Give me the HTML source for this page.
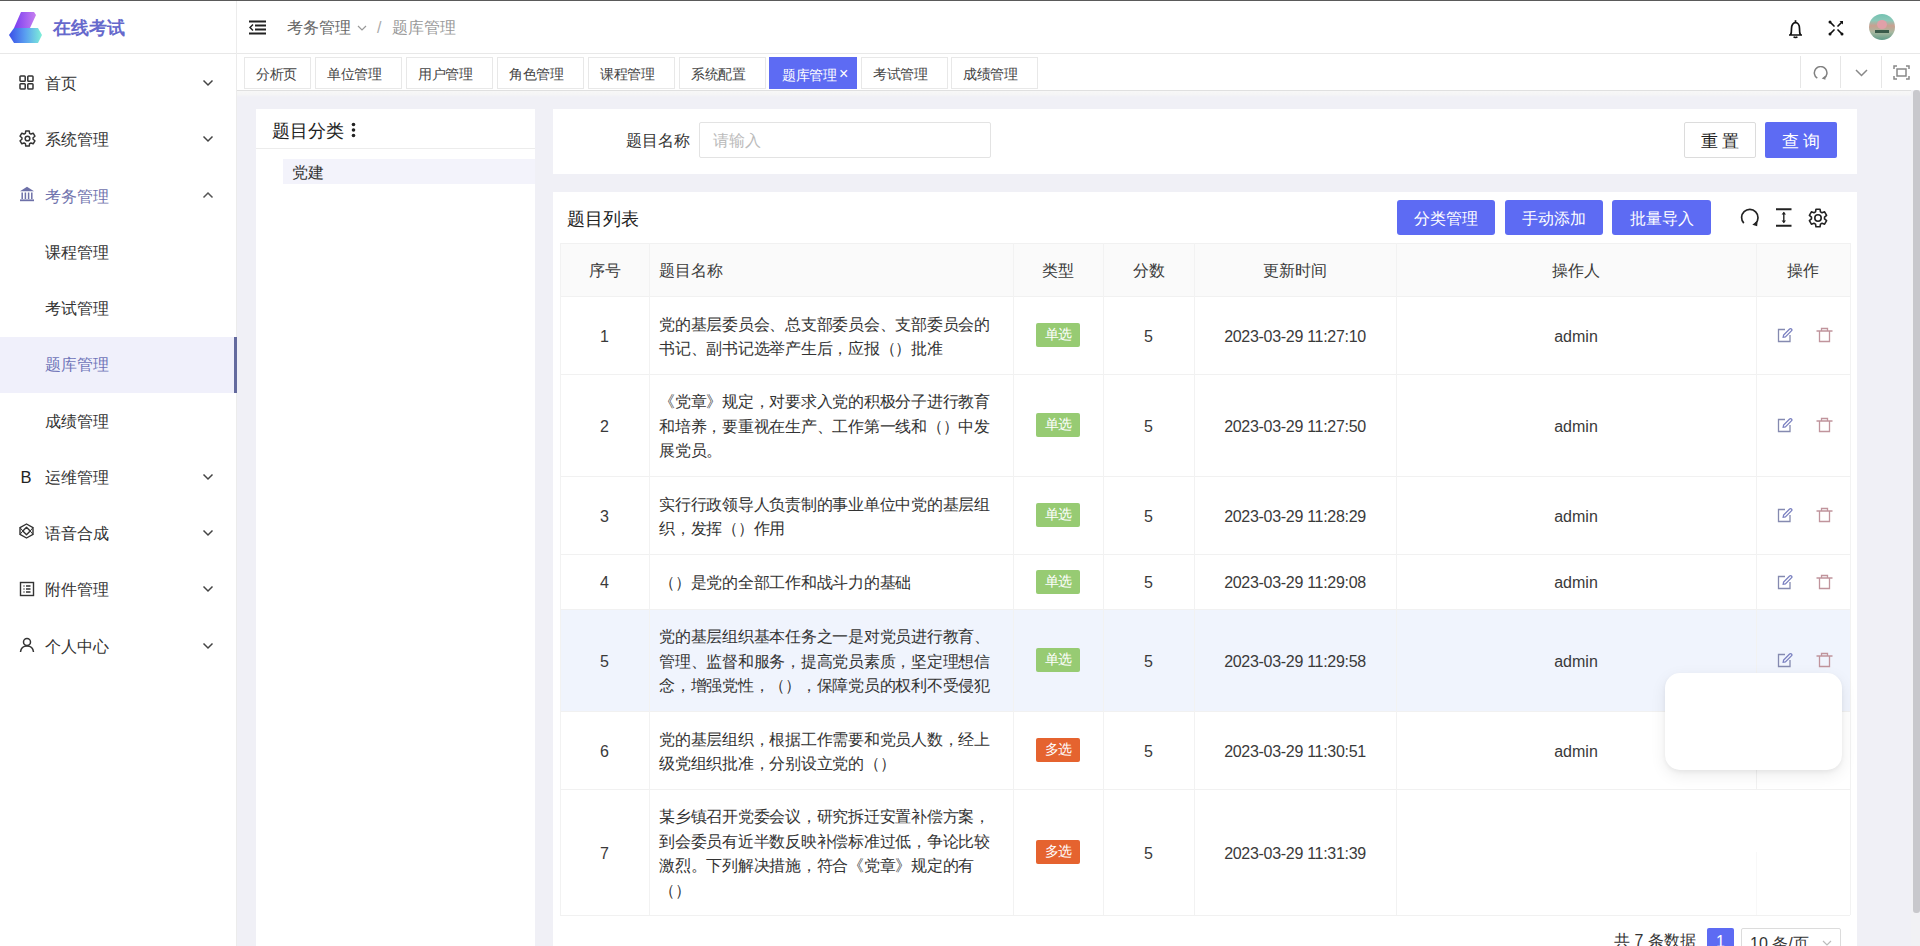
<!DOCTYPE html>
<html><head><meta charset="utf-8">
<style>
*{margin:0;padding:0;box-sizing:border-box}
html,body{width:1920px;height:946px;overflow:hidden;background:#f0f0f6;font-family:"Liberation Sans",sans-serif;color:#333}
.abs{position:absolute}
#topline{left:0;top:0;width:1920px;height:1px;background:#5a5a5a}
#side{left:0;top:1px;width:237px;height:945px;background:#fff;border-right:1px solid #ececec}
#logo{left:0;top:0;width:236px;height:53px;border-bottom:1px solid #e8e8e8}
.logotxt{left:53px;top:15px;font-size:18px;font-weight:bold;color:#6669cc;letter-spacing:0px}
.mi{position:absolute;left:0;width:236px;height:56px;font-size:16px;color:#333}
.mi .t{position:absolute;left:45px;top:17px;line-height:22px;white-space:nowrap}
.mi .ic{position:absolute;left:19px;top:20px;width:16px;height:16px}
.mi .ch{position:absolute;left:202px;top:23px;width:12px;height:8px}
.mi.act{background:#f0f0fb;color:#6f74b8}
.mi.act:after{content:"";position:absolute;right:-1px;top:0;width:3px;height:56px;background:#646a9e}
#hdr{left:237px;top:1px;width:1683px;height:53px;background:#fff;border-bottom:1px solid #e8e8e8}
#tabs{left:237px;top:54px;width:1683px;height:37px;background:#fff;border-bottom:1px solid #e0e0e0;box-shadow:0 1px 1px rgba(0,0,0,.04)}
#tabsh{left:237px;top:91px;width:1676px;height:6px;background:linear-gradient(#f7f7f7,#f5f5f6 60%,#f0f0f6)}
.tab{position:absolute;top:3px;height:32px;border:1px solid #e8e8e8;font-size:13.5px;color:#444;line-height:30px;padding-top:2px;padding-left:11px;text-align:left;background:#fff;white-space:nowrap}
.tab.on{background:#5d6bf3;border-color:#5d6bf3;color:#fff}
.sep{position:absolute;top:2px;width:1px;height:32px;background:#e6e6e6}
#lp{left:256px;top:109px;width:279px;height:837px;background:#fff}
#sc{left:553px;top:109px;width:1304px;height:65px;background:#fff}
#tc{left:553px;top:192px;width:1304px;height:754px;background:#fff}
.btn{position:absolute;height:35px;border-radius:3px;background:#5d6bf3;color:#fff;font-size:16px;line-height:37px;text-align:center;white-space:nowrap}
#scroll{left:1913px;top:90px;width:7px;height:823px;background:#c8c8cc;border-radius:3px}
#scrolltrack{left:1911px;top:90px;width:9px;height:856px;background:#f1f1f4}
.hl{position:absolute;height:1px;background:#f1f1f1}
.vl{position:absolute;width:1px;background:#f2f2f2}
.cell{position:absolute;padding-top:4px;display:flex;align-items:center;justify-content:center;font-size:16px;color:#3a3a3a;line-height:24.5px}
.qt{width:343px;white-space:nowrap;letter-spacing:-0.2px;font-size:16px;line-height:24.5px;color:#333}
.tg{display:inline-block;margin-top:-4px;width:44px;height:24px;line-height:24px;text-align:center;font-size:13.5px;color:#fff;background:#97cb73;border-radius:2px}
.tg.o{background:#e5632f}
.tm{letter-spacing:-0.3px}
.ed{position:absolute;left:21px;top:50%;margin-top:-8px}
.dl{position:absolute;left:60px;top:50%;margin-top:-8px}
@font-face{font-family:"LT";src:local("Liberation Sans");size-adjust:135%;ascent-override:67%;descent-override:15.7%;line-gap-override:0%}
i{font-style:normal;font-family:"LT","Liberation Sans",sans-serif;display:inline-block;width:1em;text-align:center;text-indent:0}
.qt i{width:0.985em}
</style></head><body>
<div id="topline" class="abs"></div>
<div id="side" class="abs">
  <div id="logo" class="abs">
    <svg class="abs" style="left:8px;top:10px" width="36" height="33" viewBox="0 0 36 33">
      <defs>
        <linearGradient id="g1" x1="0" y1="0" x2="1" y2="0"><stop offset="0" stop-color="#7a3df0"/><stop offset="1" stop-color="#c77ff0"/></linearGradient>
        <linearGradient id="g2" x1="0" y1="0" x2="1" y2="0"><stop offset="0" stop-color="#3a4ee8"/><stop offset=".5" stop-color="#5aa0f0"/><stop offset="1" stop-color="#7ff0d8"/></linearGradient>
      </defs>
      <path d="M13 1 L26 1 L28 4 L22 17 L6 17 Z" fill="url(#g1)"/>
      <path d="M6 17 L30 17 L34 24 L30 32 L6 32 L1 24 Z" fill="url(#g2)"/>
    </svg>
    <div class="abs logotxt"><i>在</i><i>线</i><i>考</i><i>试</i></div>
  </div>
  <!-- menu -->
  <div class="mi" style="top:55.0px">
    <svg class="ic" style="top:19px;width:15px;height:15px" viewBox="0 0 15 15"><g fill="none" stroke="#333" stroke-width="1.5"><rect x="1" y="1" width="5.2" height="5.2" rx="0.8"/><rect x="8.8" y="1" width="5.2" height="5.2" rx="0.8"/><rect x="1" y="8.8" width="5.2" height="5.2" rx="0.8"/><rect x="8.8" y="8.8" width="5.2" height="5.2" rx="0.8"/></g></svg>
    <span class="t"><i>首</i><i>页</i></span>
    <svg class="ch" viewBox="0 0 12 8"><path d="M1.5 1.5 L6 6 L10.5 1.5" fill="none" stroke="#444" stroke-width="1.5"/></svg>
  </div>
  <div class="mi" style="top:111.25px">
    <svg class="ic" style="left:19px;top:18px;width:17px;height:17px" viewBox="0 0 16 16"><g fill="none" stroke="#333" stroke-width="1.4" stroke-linejoin="round"><path d="M6.01 3.09 L6.36 0.89 L9.64 0.89 L9.99 3.09 L11.26 3.82 L13.34 3.02 L14.98 5.87 L13.25 7.26 L13.25 8.74 L14.98 10.13 L13.34 12.98 L11.26 12.18 L9.99 12.91 L9.64 15.11 L6.36 15.11 L6.01 12.91 L4.74 12.18 L2.66 12.98 L1.02 10.13 L2.75 8.74 L2.75 7.26 L1.02 5.87 L2.66 3.02 L4.74 3.82 Z"/><circle cx="8" cy="8" r="2.2"/></g></svg>
    <span class="t"><i>系</i><i>统</i><i>管</i><i>理</i></span>
    <svg class="ch" viewBox="0 0 12 8"><path d="M1.5 1.5 L6 6 L10.5 1.5" fill="none" stroke="#444" stroke-width="1.5"/></svg>
  </div>
  <div class="mi" style="top:167.5px;color:#6f72ad">
    <svg class="ic" style="top:17.5px" viewBox="0 0 16 16"><path d="M1 5.2 L8 0.8 L15 5.2 Z" fill="#6d70a8"/><g fill="none" stroke="#6d70a8" stroke-width="1.5"><path d="M3.2 6.5 V13 M6.4 6.5 V13 M9.6 6.5 V13 M12.8 6.5 V13"/><path d="M1 14.3 H15" stroke-width="1.8"/></g></svg>
    <span class="t"><i>考</i><i>务</i><i>管</i><i>理</i></span>
    <svg class="ch" style="top:22px" viewBox="0 0 12 8"><path d="M1.5 6.5 L6 2 L10.5 6.5" fill="none" stroke="#555" stroke-width="1.5"/></svg>
  </div>
  <div class="mi" style="top:223.75px"><span class="t"><i>课</i><i>程</i><i>管</i><i>理</i></span></div>
  <div class="mi" style="top:280.0px"><span class="t"><i>考</i><i>试</i><i>管</i><i>理</i></span></div>
  <div class="mi act" style="top:336.25px"><span class="t"><i>题</i><i>库</i><i>管</i><i>理</i></span></div>
  <div class="mi" style="top:392.5px"><span class="t"><i>成</i><i>绩</i><i>管</i><i>理</i></span></div>
  <div class="mi" style="top:448.75px">
    <span class="abs" style="left:20.5px;top:16.5px;font-size:16.5px;line-height:22px;color:#222">B</span>
    <span class="t"><i>运</i><i>维</i><i>管</i><i>理</i></span>
    <svg class="ch" viewBox="0 0 12 8"><path d="M1.5 1.5 L6 6 L10.5 1.5" fill="none" stroke="#444" stroke-width="1.5"/></svg>
  </div>
  <div class="mi" style="top:505.0px">
    <svg class="ic" style="top:17px;width:15px;height:16px" viewBox="0 0 15 16"><g fill="none" stroke="#333" stroke-width="1.4" stroke-linejoin="round"><path d="M7.5 1 L14 4.6 V11.4 L7.5 15 L1 11.4 V4.6 Z"/><path d="M7.5 4.3 L11.2 8 L7.5 11.7 L3.8 8 Z"/><path d="M1 4.6 L3.8 8 L1 11.4 M14 4.6 L11.2 8 L14 11.4" stroke-width="1"/></g></svg>
    <span class="t"><i>语</i><i>音</i><i>合</i><i>成</i></span>
    <svg class="ch" viewBox="0 0 12 8"><path d="M1.5 1.5 L6 6 L10.5 1.5" fill="none" stroke="#444" stroke-width="1.5"/></svg>
  </div>
  <div class="mi" style="top:561.25px">
    <svg class="ic" style="top:18.5px" viewBox="0 0 16 16"><g fill="none" stroke="#333" stroke-width="1.4"><rect x="1.5" y="1.5" width="13" height="13"/><path d="M4.5 5 H5.5 M4.5 8 H5.5 M4.5 11 H5.5 M7 5 H11.5 M7 8 H11.5 M7 11 H11.5"/></g></svg>
    <span class="t"><i>附</i><i>件</i><i>管</i><i>理</i></span>
    <svg class="ch" viewBox="0 0 12 8"><path d="M1.5 1.5 L6 6 L10.5 1.5" fill="none" stroke="#444" stroke-width="1.5"/></svg>
  </div>
  <div class="mi" style="top:617.5px">
    <svg class="ic" style="top:18px" viewBox="0 0 16 16"><g fill="none" stroke="#333" stroke-width="1.5"><circle cx="8" cy="5" r="3.5"/><path d="M1.5 15 C2 10.5 5 9 8 9 C11 9 14 10.5 14.5 15"/></g></svg>
    <span class="t"><i>个</i><i>人</i><i>中</i><i>心</i></span>
    <svg class="ch" viewBox="0 0 12 8"><path d="M1.5 1.5 L6 6 L10.5 1.5" fill="none" stroke="#444" stroke-width="1.5"/></svg>
  </div>
</div>

<div id="hdr" class="abs">
  <svg class="abs" style="left:12px;top:19px" width="17" height="15" viewBox="0 0 17 15"><g stroke="#222" stroke-width="1.8" fill="none"><path d="M0 1.5 H17 M6 5.5 H17 M6 9.5 H17 M0 13.5 H17"/><path d="M4 4.5 L1 7.5 L4 10.5" stroke-width="1.5"/></g></svg>
  <span class="abs" style="left:50px;top:16px;font-size:16px;color:#666;line-height:22px"><i>考</i><i>务</i><i>管</i><i>理</i></span>
  <svg class="abs" style="left:120px;top:24px" width="10" height="7" viewBox="0 0 10 7"><path d="M1 1 L5 5 L9 1" fill="none" stroke="#999" stroke-width="1.2"/></svg>
  <span class="abs" style="left:140px;top:16px;font-size:16px;color:#aaa;line-height:22px">/</span>
  <span class="abs" style="left:155px;top:16px;font-size:16px;color:#999;line-height:22px"><i>题</i><i>库</i><i>管</i><i>理</i></span>
  <!-- bell -->
  <svg class="abs" style="left:1551px;top:18px" width="15" height="20" viewBox="0 0 15 20"><g fill="none" stroke="#111" stroke-width="1.7" stroke-linejoin="round"><path d="M1 16 H14 M2.6 16 C3.4 14.5 3.5 12.5 3.5 9.5 C3.5 6 5.2 3.6 7.5 3.6 C9.8 3.6 11.5 6 11.5 9.5 C11.5 12.5 11.6 14.5 12.4 16"/><path d="M7.5 1.2 V3.6"/><path d="M5.8 17.6 C6.3 18.8 8.7 18.8 9.2 17.6"/></g></svg>
  <!-- fullscreen -->
  <svg class="abs" style="left:1591px;top:19px" width="16" height="16" viewBox="0 0 16 16"><g fill="none" stroke="#111" stroke-width="1.7" stroke-linecap="round"><path d="M2 2 L6 6 M14 2 L10 6 M2 14 L6 10 M14 14 L10 10"/></g><g fill="#111"><circle cx="2" cy="2" r="1.5"/><path d="M11.5 1 H15 V4.5 Z"/><circle cx="2" cy="14" r="1.5"/><circle cx="14" cy="14" r="1.5"/></g></svg>
  <!-- avatar -->
  <div class="abs" style="left:1632px;top:13px;width:26px;height:26px;border-radius:50%;overflow:hidden;background:linear-gradient(180deg,#74c2b2 0%,#8cc8b8 25%,#c9a090 45%,#a8b8a0 70%,#5e9a88 100%)"><div style="position:absolute;left:8px;top:6px;width:10px;height:9px;border-radius:50%;background:#e0a0a8"></div><div style="position:absolute;left:6px;top:16px;width:14px;height:3px;background:#3a5a4a"></div></div>
</div>

<div id="tabs" class="abs">
  <div class="tab" style="left:7px;width:67px"><i>分</i><i>析</i><i>页</i></div>
  <div class="tab" style="left:78px;width:87px"><i>单</i><i>位</i><i>管</i><i>理</i></div>
  <div class="tab" style="left:169px;width:87px"><i>用</i><i>户</i><i>管</i><i>理</i></div>
  <div class="tab" style="left:260px;width:87px"><i>角</i><i>色</i><i>管</i><i>理</i></div>
  <div class="tab" style="left:351px;width:87px"><i>课</i><i>程</i><i>管</i><i>理</i></div>
  <div class="tab" style="left:442px;width:87px"><i>系</i><i>统</i><i>配</i><i>置</i></div>
  <div class="tab on" style="left:532px;width:88px;padding-left:12px"><i>题</i><i>库</i><i>管</i><i>理</i><span style="font-size:16px;margin-left:3px;position:relative;top:-1px">×</span></div>
  <div class="tab" style="left:624px;width:87px"><i>考</i><i>试</i><i>管</i><i>理</i></div>
  <div class="tab" style="left:714px;width:87px"><i>成</i><i>绩</i><i>管</i><i>理</i></div>
  <div class="sep" style="left:1563px"></div>
  <div class="sep" style="left:1603px"></div>
  <div class="sep" style="left:1644px"></div>
  <svg class="abs" style="left:1576px;top:12px" width="15" height="15" viewBox="0 0 15 15"><path d="M4.3 12.2 A6.3 6.3 0 1 1 11 12.2" fill="none" stroke="#808080" stroke-width="1.5"/><path d="M8.7 12.6 L12.6 9.6 L12.4 13.8 Z" fill="#808080"/></svg>
  <svg class="abs" style="left:1618px;top:15px" width="13" height="8" viewBox="0 0 13 8"><path d="M1 1 L6.5 6.5 L12 1" fill="none" stroke="#888" stroke-width="1.5"/></svg>
  <svg class="abs" style="left:1656px;top:11px" width="17" height="15" viewBox="0 0 17 15"><g fill="none" stroke="#888" stroke-width="1.5"><rect x="4" y="4" width="9" height="7"/><path d="M1 4 V1 H4 M13 1 H16 V4 M16 11 V14 H13 M4 14 H1 V11"/></g></svg>
</div>

<div id="tabsh" class="abs"></div>
<div id="lp" class="abs">
  <span class="abs" style="left:16px;top:10px;font-size:18px;line-height:24px;color:#222"><i>题</i><i>目</i><i>分</i><i>类</i></span>
  <svg class="abs" style="left:95px;top:13px" width="5" height="16" viewBox="0 0 5 16"><g fill="#222"><circle cx="2.5" cy="2.5" r="1.8"/><circle cx="2.5" cy="8" r="1.8"/><circle cx="2.5" cy="13.5" r="1.8"/></g></svg>
  <div class="abs" style="left:0;top:39px;width:279px;height:1px;background:#ececec"></div>
  <div class="abs" style="left:27px;top:50px;width:252px;height:25px;background:#f3f3fb"></div>
  <span class="abs" style="left:36px;top:53px;font-size:16px;line-height:22px;color:#333"><i>党</i><i>建</i></span>
</div>

<div id="sc" class="abs">
  <span class="abs" style="left:73px;top:21px;font-size:16px;line-height:22px;color:#333"><i>题</i><i>目</i><i>名</i><i>称</i></span>
  <div class="abs" style="left:146px;top:13px;width:292px;height:36px;border:1px solid #e3e3e3;border-radius:2px"></div>
  <span class="abs" style="left:160px;top:21px;font-size:16px;line-height:22px;color:#bbb"><i>请</i><i>输</i><i>入</i></span>
  <div class="btn" style="left:1131px;top:13px;width:72px;height:36px;background:#fff;border:1px solid #dcdcdc;color:#222;line-height:36px;font-size:16.5px;border-radius:2px"><i>重</i> <i>置</i></div>
  <div class="btn" style="left:1212px;top:13px;width:72px;height:36px;line-height:38px;font-size:16.5px;border-radius:2px"><i>查</i> <i>询</i></div>
</div>

<div id="tc" class="abs">
  <span class="abs" style="left:14px;top:15px;font-size:18px;line-height:24px;color:#222"><i>题</i><i>目</i><i>列</i><i>表</i></span>
  <div class="btn" style="left:844px;top:8px;width:98px"><i>分</i><i>类</i><i>管</i><i>理</i></div>
  <div class="btn" style="left:952px;top:8px;width:98px"><i>手</i><i>动</i><i>添</i><i>加</i></div>
  <div class="btn" style="left:1059px;top:8px;width:99px"><i>批</i><i>量</i><i>导</i><i>入</i></div>
<div class="abs" style="left:7px;top:51px;width:1290px;height:53px;background:#fafafa"></div>
<div class="abs" style="left:7px;top:417px;width:1290px;height:102px;background:#f0f4fd"></div>
<div class="hl" style="left:7px;top:51px;width:1290px"></div>
<div class="hl" style="left:7px;top:104px;width:1290px"></div>
<div class="hl" style="left:7px;top:182px;width:1290px"></div>
<div class="hl" style="left:7px;top:284px;width:1290px"></div>
<div class="hl" style="left:7px;top:362px;width:1290px"></div>
<div class="hl" style="left:7px;top:417px;width:1290px"></div>
<div class="hl" style="left:7px;top:519px;width:1290px"></div>
<div class="hl" style="left:7px;top:597px;width:1290px"></div>
<div class="hl" style="left:7px;top:723px;width:1290px"></div>
<div class="vl" style="left:7px;top:51px;height:672px"></div>
<div class="vl" style="left:96px;top:51px;height:672px"></div>
<div class="vl" style="left:460px;top:51px;height:672px"></div>
<div class="vl" style="left:550px;top:51px;height:672px"></div>
<div class="vl" style="left:641px;top:51px;height:672px"></div>
<div class="vl" style="left:843px;top:51px;height:672px"></div>
<div class="vl" style="left:1203px;top:51px;height:546px"></div><div class="vl" style="left:1203px;top:660px;height:63px;background:#f8f8f8"></div>
<div class="vl" style="left:1297px;top:51px;height:672px"></div>
<div class="cell" style="left:7px;top:51px;width:89px;height:53px"><i>序</i><i>号</i></div>
<div class="cell" style="left:106px;top:51px;width:354px;height:53px;justify-content:flex-start"><i>题</i><i>目</i><i>名</i><i>称</i></div>
<div class="cell" style="left:460px;top:51px;width:90px;height:53px"><i>类</i><i>型</i></div>
<div class="cell" style="left:550px;top:51px;width:91px;height:53px"><i>分</i><i>数</i></div>
<div class="cell" style="left:641px;top:51px;width:202px;height:53px"><i>更</i><i>新</i><i>时</i><i>间</i></div>
<div class="cell" style="left:843px;top:51px;width:360px;height:53px"><i>操</i><i>作</i><i>人</i></div>
<div class="cell" style="left:1203px;top:51px;width:94px;height:53px"><i>操</i><i>作</i></div>
<div class="cell" style="left:7px;top:104px;width:89px;height:78px;">1</div>
<div class="cell" style="left:106px;top:104px;width:344px;height:78px;justify-content:flex-start"><div class="qt"><i>党</i><i>的</i><i>基</i><i>层</i><i>委</i><i>员</i><i>会</i><i>、</i><i>总</i><i>支</i><i>部</i><i>委</i><i>员</i><i>会</i><i>、</i><i>支</i><i>部</i><i>委</i><i>员</i><i>会</i><i>的</i><br><i>书</i><i>记</i><i>、</i><i>副</i><i>书</i><i>记</i><i>选</i><i>举</i><i>产</i><i>生</i><i>后</i><i>，</i><i>应</i><i>报</i><i>（</i><i>）</i><i>批</i><i>准</i></div></div>
<div class="cell" style="left:460px;top:104px;width:90px;height:78px;"><span class="tg"><i>单</i><i>选</i></span></div>
<div class="cell" style="left:550px;top:104px;width:91px;height:78px;">5</div>
<div class="cell" style="left:641px;top:104px;width:202px;height:78px;"><span class="tm">2023-03-29 11:27:10</span></div>
<div class="cell" style="left:843px;top:104px;width:360px;height:78px;">admin</div>
<div class="cell" style="left:1203px;top:104px;width:94px;height:78px;"><svg class="ed" width="16" height="16" viewBox="0 0 16 16"><g fill="none" stroke="#858ab0" stroke-width="1.3"><path d="M8 2.5 H1.5 V14.5 H13 V8"/><path d="M6.2 10.2 L6.6 8 L12.6 2 C13.2 1.4 14 1.4 14.5 2 C15 2.5 15 3.3 14.4 3.9 L8.4 9.9 Z" stroke="#7a80c0"/></g></svg><svg class="dl" width="17" height="16" viewBox="0 0 17 16"><g fill="none" stroke="#c0949c" stroke-width="1.3"><path d="M0.5 4 H16.5 M5.5 4 V1.5 H11.5 V4 M3.5 4 V14.5 H13.5 V4"/></g></svg></div>
<div class="cell" style="left:7px;top:182px;width:89px;height:102px;">2</div>
<div class="cell" style="left:106px;top:182px;width:344px;height:102px;justify-content:flex-start"><div class="qt"><i>《</i><i>党</i><i>章</i><i>》</i><i>规</i><i>定</i><i>，</i><i>对</i><i>要</i><i>求</i><i>入</i><i>党</i><i>的</i><i>积</i><i>极</i><i>分</i><i>子</i><i>进</i><i>行</i><i>教</i><i>育</i><br><i>和</i><i>培</i><i>养</i><i>，</i><i>要</i><i>重</i><i>视</i><i>在</i><i>生</i><i>产</i><i>、</i><i>工</i><i>作</i><i>第</i><i>一</i><i>线</i><i>和</i><i>（</i><i>）</i><i>中</i><i>发</i><br><i>展</i><i>党</i><i>员</i><i>。</i></div></div>
<div class="cell" style="left:460px;top:182px;width:90px;height:102px;"><span class="tg"><i>单</i><i>选</i></span></div>
<div class="cell" style="left:550px;top:182px;width:91px;height:102px;">5</div>
<div class="cell" style="left:641px;top:182px;width:202px;height:102px;"><span class="tm">2023-03-29 11:27:50</span></div>
<div class="cell" style="left:843px;top:182px;width:360px;height:102px;">admin</div>
<div class="cell" style="left:1203px;top:182px;width:94px;height:102px;"><svg class="ed" width="16" height="16" viewBox="0 0 16 16"><g fill="none" stroke="#858ab0" stroke-width="1.3"><path d="M8 2.5 H1.5 V14.5 H13 V8"/><path d="M6.2 10.2 L6.6 8 L12.6 2 C13.2 1.4 14 1.4 14.5 2 C15 2.5 15 3.3 14.4 3.9 L8.4 9.9 Z" stroke="#7a80c0"/></g></svg><svg class="dl" width="17" height="16" viewBox="0 0 17 16"><g fill="none" stroke="#c0949c" stroke-width="1.3"><path d="M0.5 4 H16.5 M5.5 4 V1.5 H11.5 V4 M3.5 4 V14.5 H13.5 V4"/></g></svg></div>
<div class="cell" style="left:7px;top:284px;width:89px;height:78px;">3</div>
<div class="cell" style="left:106px;top:284px;width:344px;height:78px;justify-content:flex-start"><div class="qt"><i>实</i><i>行</i><i>行</i><i>政</i><i>领</i><i>导</i><i>人</i><i>负</i><i>责</i><i>制</i><i>的</i><i>事</i><i>业</i><i>单</i><i>位</i><i>中</i><i>党</i><i>的</i><i>基</i><i>层</i><i>组</i><br><i>织</i><i>，</i><i>发</i><i>挥</i><i>（</i><i>）</i><i>作</i><i>用</i></div></div>
<div class="cell" style="left:460px;top:284px;width:90px;height:78px;"><span class="tg"><i>单</i><i>选</i></span></div>
<div class="cell" style="left:550px;top:284px;width:91px;height:78px;">5</div>
<div class="cell" style="left:641px;top:284px;width:202px;height:78px;"><span class="tm">2023-03-29 11:28:29</span></div>
<div class="cell" style="left:843px;top:284px;width:360px;height:78px;">admin</div>
<div class="cell" style="left:1203px;top:284px;width:94px;height:78px;"><svg class="ed" width="16" height="16" viewBox="0 0 16 16"><g fill="none" stroke="#858ab0" stroke-width="1.3"><path d="M8 2.5 H1.5 V14.5 H13 V8"/><path d="M6.2 10.2 L6.6 8 L12.6 2 C13.2 1.4 14 1.4 14.5 2 C15 2.5 15 3.3 14.4 3.9 L8.4 9.9 Z" stroke="#7a80c0"/></g></svg><svg class="dl" width="17" height="16" viewBox="0 0 17 16"><g fill="none" stroke="#c0949c" stroke-width="1.3"><path d="M0.5 4 H16.5 M5.5 4 V1.5 H11.5 V4 M3.5 4 V14.5 H13.5 V4"/></g></svg></div>
<div class="cell" style="left:7px;top:362px;width:89px;height:55px;">4</div>
<div class="cell" style="left:106px;top:362px;width:344px;height:55px;justify-content:flex-start"><div class="qt"><i>（</i><i>）</i><i>是</i><i>党</i><i>的</i><i>全</i><i>部</i><i>工</i><i>作</i><i>和</i><i>战</i><i>斗</i><i>力</i><i>的</i><i>基</i><i>础</i></div></div>
<div class="cell" style="left:460px;top:362px;width:90px;height:55px;"><span class="tg"><i>单</i><i>选</i></span></div>
<div class="cell" style="left:550px;top:362px;width:91px;height:55px;">5</div>
<div class="cell" style="left:641px;top:362px;width:202px;height:55px;"><span class="tm">2023-03-29 11:29:08</span></div>
<div class="cell" style="left:843px;top:362px;width:360px;height:55px;">admin</div>
<div class="cell" style="left:1203px;top:362px;width:94px;height:55px;"><svg class="ed" width="16" height="16" viewBox="0 0 16 16"><g fill="none" stroke="#858ab0" stroke-width="1.3"><path d="M8 2.5 H1.5 V14.5 H13 V8"/><path d="M6.2 10.2 L6.6 8 L12.6 2 C13.2 1.4 14 1.4 14.5 2 C15 2.5 15 3.3 14.4 3.9 L8.4 9.9 Z" stroke="#7a80c0"/></g></svg><svg class="dl" width="17" height="16" viewBox="0 0 17 16"><g fill="none" stroke="#c0949c" stroke-width="1.3"><path d="M0.5 4 H16.5 M5.5 4 V1.5 H11.5 V4 M3.5 4 V14.5 H13.5 V4"/></g></svg></div>
<div class="cell" style="left:7px;top:417px;width:89px;height:102px;">5</div>
<div class="cell" style="left:106px;top:417px;width:344px;height:102px;justify-content:flex-start"><div class="qt"><i>党</i><i>的</i><i>基</i><i>层</i><i>组</i><i>织</i><i>基</i><i>本</i><i>任</i><i>务</i><i>之</i><i>一</i><i>是</i><i>对</i><i>党</i><i>员</i><i>进</i><i>行</i><i>教</i><i>育</i><i>、</i><br><i>管</i><i>理</i><i>、</i><i>监</i><i>督</i><i>和</i><i>服</i><i>务</i><i>，</i><i>提</i><i>高</i><i>党</i><i>员</i><i>素</i><i>质</i><i>，</i><i>坚</i><i>定</i><i>理</i><i>想</i><i>信</i><br><i>念</i><i>，</i><i>增</i><i>强</i><i>党</i><i>性</i><i>，</i><i>（</i><i>）</i><i>，</i><i>保</i><i>障</i><i>党</i><i>员</i><i>的</i><i>权</i><i>利</i><i>不</i><i>受</i><i>侵</i><i>犯</i></div></div>
<div class="cell" style="left:460px;top:417px;width:90px;height:102px;"><span class="tg"><i>单</i><i>选</i></span></div>
<div class="cell" style="left:550px;top:417px;width:91px;height:102px;">5</div>
<div class="cell" style="left:641px;top:417px;width:202px;height:102px;"><span class="tm">2023-03-29 11:29:58</span></div>
<div class="cell" style="left:843px;top:417px;width:360px;height:102px;">admin</div>
<div class="cell" style="left:1203px;top:417px;width:94px;height:102px;"><svg class="ed" width="16" height="16" viewBox="0 0 16 16"><g fill="none" stroke="#858ab0" stroke-width="1.3"><path d="M8 2.5 H1.5 V14.5 H13 V8"/><path d="M6.2 10.2 L6.6 8 L12.6 2 C13.2 1.4 14 1.4 14.5 2 C15 2.5 15 3.3 14.4 3.9 L8.4 9.9 Z" stroke="#7a80c0"/></g></svg><svg class="dl" width="17" height="16" viewBox="0 0 17 16"><g fill="none" stroke="#c0949c" stroke-width="1.3"><path d="M0.5 4 H16.5 M5.5 4 V1.5 H11.5 V4 M3.5 4 V14.5 H13.5 V4"/></g></svg></div>
<div class="cell" style="left:7px;top:519px;width:89px;height:78px;">6</div>
<div class="cell" style="left:106px;top:519px;width:344px;height:78px;justify-content:flex-start"><div class="qt"><i>党</i><i>的</i><i>基</i><i>层</i><i>组</i><i>织</i><i>，</i><i>根</i><i>据</i><i>工</i><i>作</i><i>需</i><i>要</i><i>和</i><i>党</i><i>员</i><i>人</i><i>数</i><i>，</i><i>经</i><i>上</i><br><i>级</i><i>党</i><i>组</i><i>织</i><i>批</i><i>准</i><i>，</i><i>分</i><i>别</i><i>设</i><i>立</i><i>党</i><i>的</i><i>（</i><i>）</i></div></div>
<div class="cell" style="left:460px;top:519px;width:90px;height:78px;"><span class="tg o"><i>多</i><i>选</i></span></div>
<div class="cell" style="left:550px;top:519px;width:91px;height:78px;">5</div>
<div class="cell" style="left:641px;top:519px;width:202px;height:78px;"><span class="tm">2023-03-29 11:30:51</span></div>
<div class="cell" style="left:843px;top:519px;width:360px;height:78px;">admin</div>
<div class="cell" style="left:7px;top:597px;width:89px;height:126px;">7</div>
<div class="cell" style="left:106px;top:597px;width:344px;height:126px;justify-content:flex-start"><div class="qt"><i>某</i><i>乡</i><i>镇</i><i>召</i><i>开</i><i>党</i><i>委</i><i>会</i><i>议</i><i>，</i><i>研</i><i>究</i><i>拆</i><i>迁</i><i>安</i><i>置</i><i>补</i><i>偿</i><i>方</i><i>案</i><i>，</i><br><i>到</i><i>会</i><i>委</i><i>员</i><i>有</i><i>近</i><i>半</i><i>数</i><i>反</i><i>映</i><i>补</i><i>偿</i><i>标</i><i>准</i><i>过</i><i>低</i><i>，</i><i>争</i><i>论</i><i>比</i><i>较</i><br><i>激</i><i>烈</i><i>。</i><i>下</i><i>列</i><i>解</i><i>决</i><i>措</i><i>施</i><i>，</i><i>符</i><i>合</i><i>《</i><i>党</i><i>章</i><i>》</i><i>规</i><i>定</i><i>的</i><i>有</i><br><i>（</i><i>）</i></div></div>
<div class="cell" style="left:460px;top:597px;width:90px;height:126px;"><span class="tg o"><i>多</i><i>选</i></span></div>
<div class="cell" style="left:550px;top:597px;width:91px;height:126px;">5</div>
<div class="cell" style="left:641px;top:597px;width:202px;height:126px;"><span class="tm">2023-03-29 11:31:39</span></div>

  <!-- toolbar icons -->
  <svg class="abs" style="left:1187px;top:16px" width="20" height="20" viewBox="0 0 20 20"><path d="M3.8 15.2 A8.2 8.2 0 1 1 15.6 15.4" fill="none" stroke="#222" stroke-width="1.7"/><path d="M12.3 16.8 L17.6 12.4 L17.2 18.2 Z" fill="#222"/></svg>
  <svg class="abs" style="left:1223px;top:16px" width="16" height="19" viewBox="0 0 16 19"><g stroke="#222" fill="none"><path d="M0 1.2 H15.5 M0 17.8 H15.5" stroke-width="1.9"/><path d="M7.8 4.5 V14.5" stroke-width="1.4"/></g><path d="M5.6 6.6 L7.8 3.8 L10 6.6 Z M5.6 12.4 L7.8 15.2 L10 12.4 Z" fill="#222"/></svg>
  <svg class="abs" style="left:1255px;top:16px" width="20" height="20" viewBox="0 0 20 20"><g fill="none" stroke="#222" stroke-width="1.6" stroke-linejoin="round"><path d="M7.53 3.88 L7.98 1.23 L12.02 1.23 L12.47 3.88 L14.06 4.80 L16.58 3.86 L18.61 7.37 L16.54 9.08 L16.54 10.92 L18.61 12.63 L16.58 16.14 L14.06 15.20 L12.47 16.12 L12.02 18.77 L7.98 18.77 L7.53 16.12 L5.94 15.20 L3.42 16.14 L1.39 12.63 L3.46 10.92 L3.46 9.08 L1.39 7.37 L3.42 3.86 L5.94 4.80 Z"/><circle cx="10" cy="10" r="3.2"/></g></svg>
  <!-- pagination -->
  <span class="abs" style="left:1061px;top:738px;font-size:16px;line-height:22px;color:#333"><i>共</i> 7 <i>条</i><i>数</i><i>据</i></span>
  <div class="abs" style="left:1154px;top:736px;width:27px;height:28px;background:#5d6bf3;color:#fff;font-size:16px;line-height:28px;text-align:center;border-radius:2px">1</div>
  <div class="abs" style="left:1188px;top:736px;width:100px;height:30px;border:1px solid #dcdcdc;border-radius:2px"></div>
  <span class="abs" style="left:1197px;top:741px;font-size:16px;line-height:22px;color:#333">10 <i>条</i>/<i>页</i></span>
  <svg class="abs" style="left:1269px;top:748px" width="10" height="7" viewBox="0 0 10 7"><path d="M1 1 L5 5 L9 1" fill="none" stroke="#bbb" stroke-width="1.2"/></svg>

</div>

<div class="abs" style="left:1665px;top:673px;width:177px;height:97px;background:#fff;border-radius:15px;box-shadow:0 2px 4px rgba(0,0,0,.05),0 5px 16px rgba(0,0,0,.08)"></div>
<div id="scrolltrack" class="abs"></div>
<div id="scroll" class="abs"></div>
</body></html>
